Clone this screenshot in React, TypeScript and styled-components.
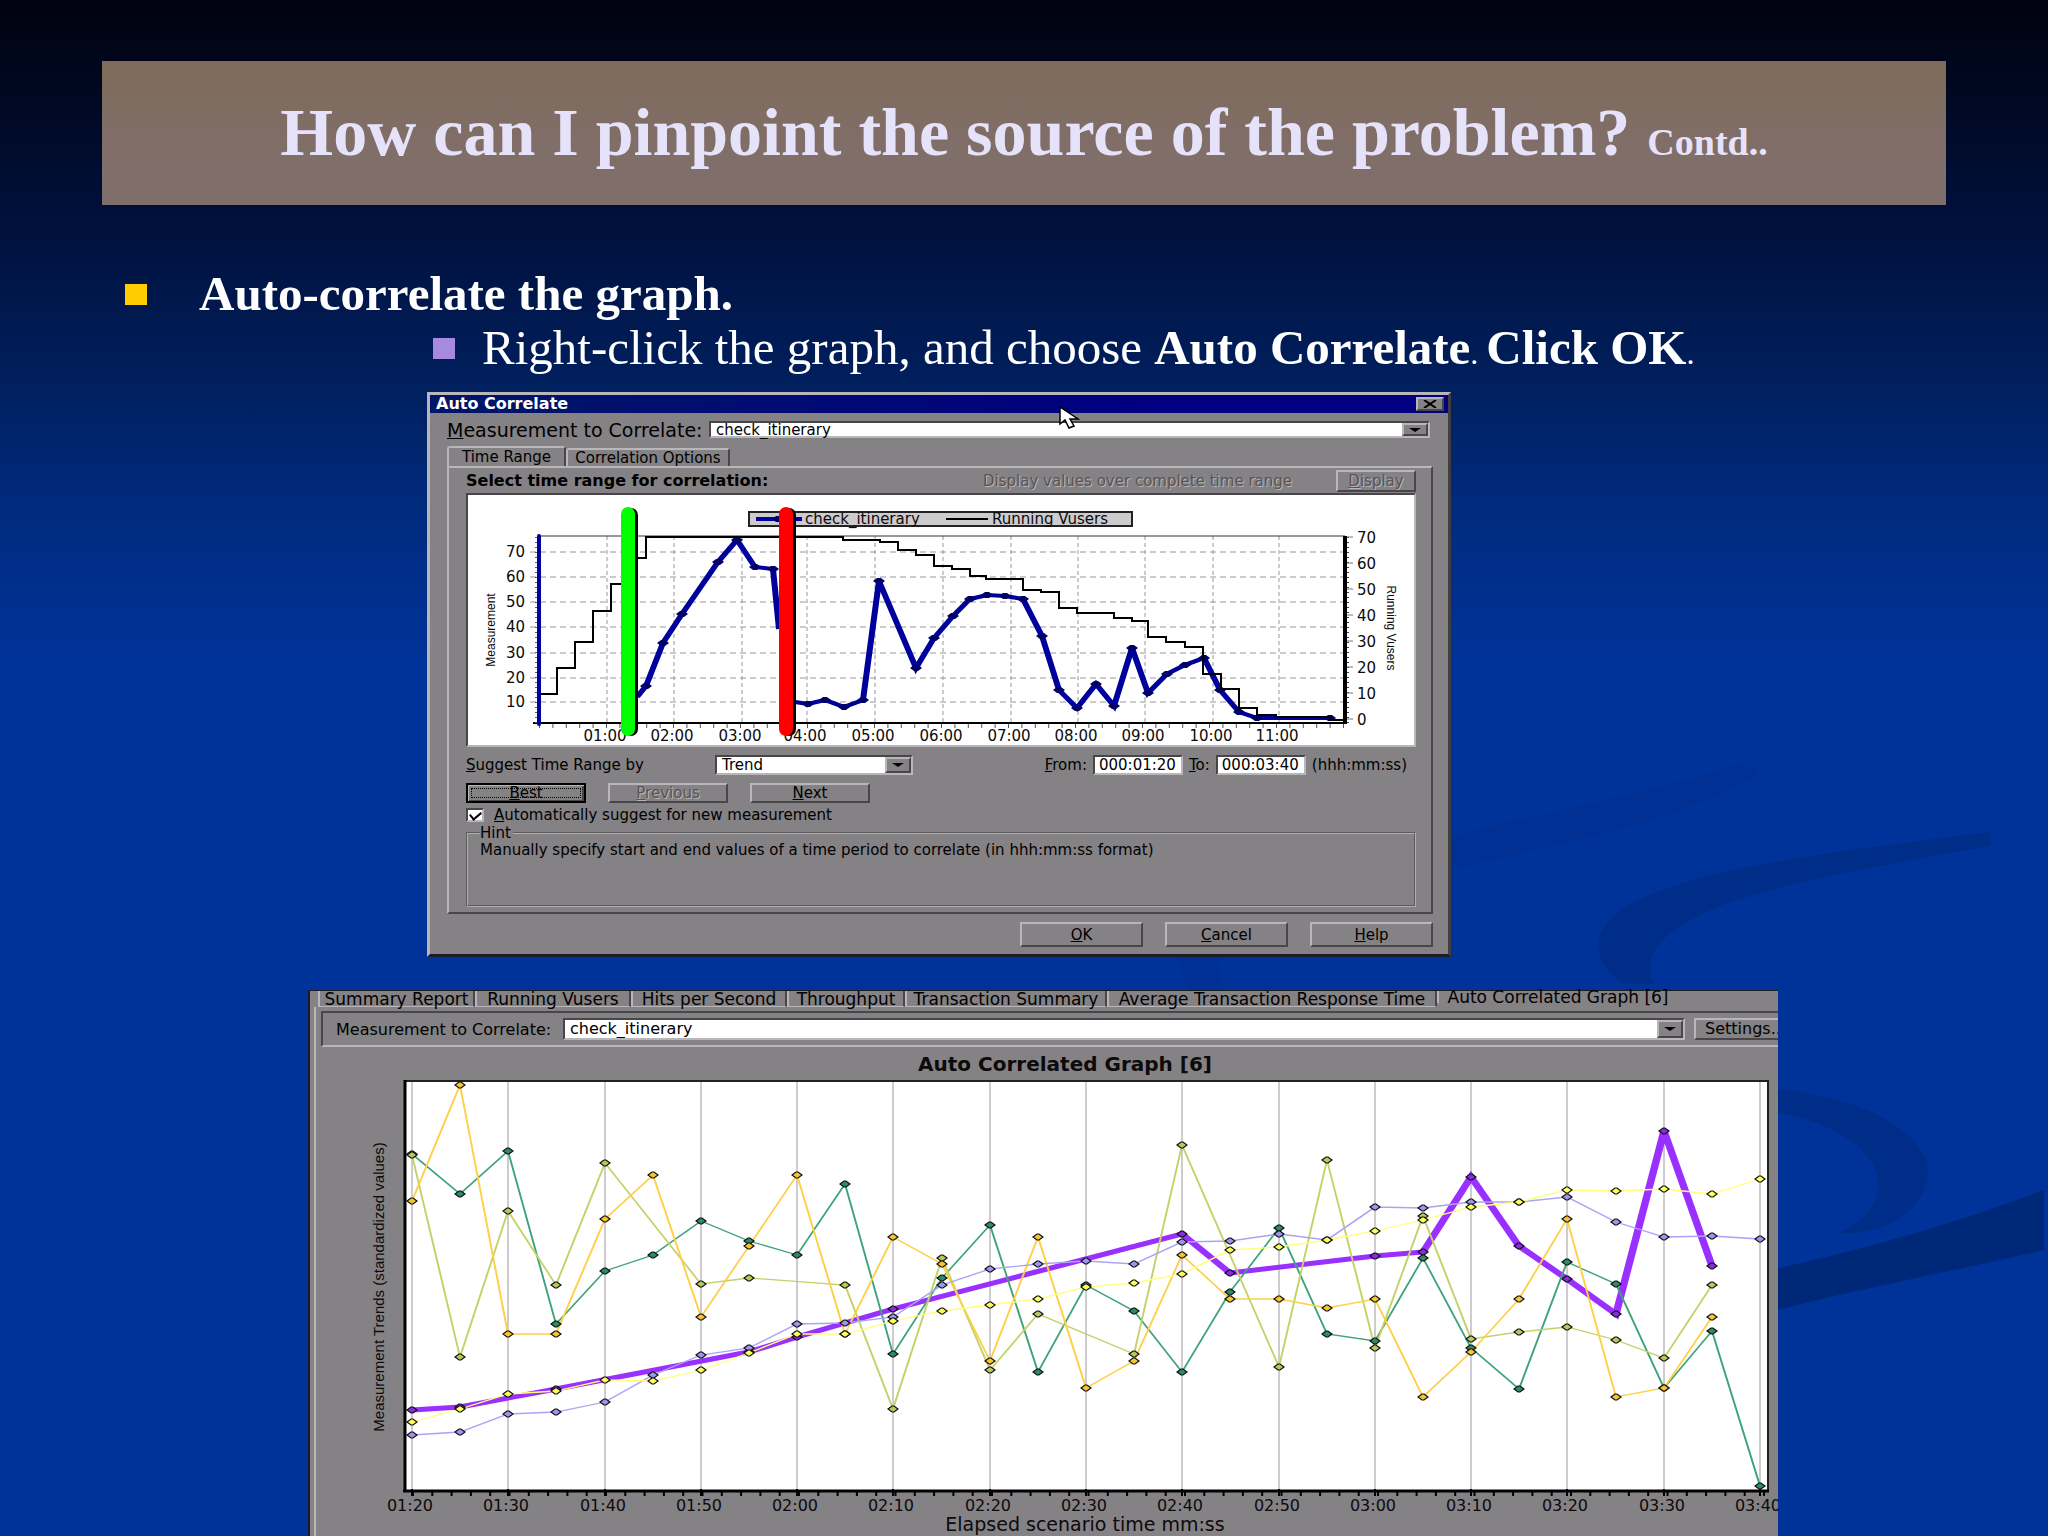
import React from "react";
import styled, { createGlobalStyle, css } from "styled-components";

const face = "#848284";
const light = "#b8b6b8";
const dark = "#484648";
const sans = '"DejaVu Sans", Verdana, sans-serif';
const narrow = '"Liberation Sans Narrow", "Arial Narrow", "Liberation Sans", sans-serif';

const raised = css`
  border: 2px solid;
  border-color: ${light} ${dark} ${dark} ${light};
`;
const sunken = css`
  border: 2px solid;
  border-color: ${dark} ${light} ${light} ${dark};
`;

const GlobalStyle = createGlobalStyle`
  * { box-sizing: border-box; }
  body { margin: 0; background: #003399; }
`;

const Slide = styled.main`
  position: relative;
  display: flex;
  flex-direction: column;
  min-height: 100vh;
  overflow: hidden;
  background: linear-gradient(#00020f 0, #00113d 230px, #00205f 390px, #002a7c 500px, #003399 660px);
  font-family: "Liberation Serif", "Times New Roman", serif;
`;

const Swirls = styled.svg`
  position: absolute;
  inset: 0;
  width: 100%;
  height: 100%;
`;

const Header = styled.header`
  position: relative;
  display: flex;
  justify-content: center;
  align-items: center;
  min-height: 144px;
  margin: 61px 102px 62px;
  padding-top: 8px;
  background: linear-gradient(#7f6b59, #806e69 60%, #806e6c);
`;

const Title = styled.h1`
  margin: 0;
  font-size: 68px;
  line-height: 80px;
  color: #e6e2fa;
`;

const TitleNote = styled.span`
  font-size: 38px;
`;

const Bullets = styled.ul`
  position: relative;
  margin: 0 0 17px;
  padding: 0;
  list-style: none;
  font-size: 49px;
  line-height: 54px;
  color: #fff;
`;

const Bullet = styled.li<{ $indent: number; $gap: number; $color: string }>`
  display: flex;
  align-items: center;
  gap: ${(p) => p.$gap}px;
  padding-left: ${(p) => p.$indent}px;

  &::before {
    content: "";
    width: 22px;
    height: 21px;
    background: ${(p) => p.$color};
  }
`;

const SmallDot = styled.span`
  font-size: 32px;
  line-height: 1;
`;

const Dialog = styled.section`
  position: relative;
  width: 50%;
  min-width: 1024px;
  margin: 0 0 33px 427px;
  border: 3px solid;
  border-color: ${light} #403e40 #1c1c24 ${light};
  background: ${face};
  font-family: ${sans};
  font-size: 15px;
  line-height: 16px;
  color: #000;
`;

const TitleBar = styled.div`
  display: flex;
  justify-content: space-between;
  align-items: center;
  height: 18px;
  padding: 0 4px 0 6px;
  background: linear-gradient(90deg, #001666, #000080 70%);
`;

const DialogTitle = styled.h2`
  margin: 0;
  font-size: 16px;
  line-height: 18px;
  color: #fff;
`;

const CloseButton = styled.button`
  ${raised}
  display: flex;
  justify-content: center;
  align-items: center;
  width: 28px;
  height: 14px;
  padding: 0;
  background: ${face};
`;

const DialogBody = styled.div`
  padding: 8px 15px 7px 17px;
`;

const CorrelateRow = styled.div`
  display: flex;
  align-items: center;
  gap: 4px;
  height: 17px;
  margin-bottom: 8px;
  padding-right: 3px;
`;

const BigLabel = styled.label`
  width: 258px;
  font-size: 19px;
  white-space: nowrap;
`;

const Combo = styled.span<{ $width?: number }>`
  ${sunken}
  display: flex;
  align-self: stretch;
  flex: ${(p) => (p.$width ? `0 0 ${p.$width}px` : "1")};
  background: #fff;
`;

const Select = styled.select`
  flex: 1;
  min-width: 0;
  margin: -3px 0;
  padding: 0 5px;
  border: 0;
  appearance: none;
  background: transparent;
  font: inherit;
  line-height: 18px;
  color: #000;
`;

const ComboArrow = styled.span`
  ${raised}
  display: flex;
  justify-content: center;
  align-items: center;
  width: 26px;
  background: ${face};

  &::after {
    content: "";
    border: 6px solid transparent;
    border-top: 4px solid #000;
    border-bottom: 0;
  }
`;

const Tabs = styled.div`
  display: flex;
  align-items: flex-end;
  height: 20px;
`;

const Tab = styled.button<{ $active?: boolean }>`
  height: ${(p) => (p.$active ? 20 : 18)}px;
  width: ${(p) => (p.$active ? 119 : 164)}px;
  padding: 0;
  border: 2px solid;
  border-color: ${light} ${dark} transparent ${light};
  border-bottom: 0;
  border-radius: 3px 3px 0 0;
  background: ${face};
  font: inherit;
  white-space: nowrap;
`;

const TabPanel = styled.div`
  ${raised}
  display: flex;
  flex-direction: column;
  padding: 2px 15px 5px 17px;
`;

const RangeHead = styled.div`
  display: flex;
  align-items: center;
  height: 22px;
  margin-bottom: 1px;
`;

const RangeTitle = styled.strong`
  font-size: 16px;
  white-space: nowrap;
`;

const embossed = css`
  color: #565456;
  text-shadow: 1px 1px ${light};
`;

const DisabledText = styled.span`
  ${embossed}
  margin: 0 44px 0 auto;
  white-space: nowrap;
`;

const Button = styled.button<{ $width: number; $height: number; $focus?: boolean }>`
  ${raised}
  width: ${(p) => p.$width}px;
  height: ${(p) => p.$height}px;
  padding: 0;
  background: ${face};
  font: inherit;
  line-height: 14px;
  color: #000;

  ${(p) =>
    p.$focus &&
    css`
      outline: 1px dotted #000;
      outline-offset: -6px;
      border-color: #000;
      box-shadow: inset 1px 1px ${light}, inset -2px -1px ${dark};
    `}

  &:disabled {
    ${embossed}
  }
`;

const ChartBox = styled.div`
  ${sunken}
  background: #fff;
`;

const Chart = styled.svg`
  display: block;
  width: 100%;
  height: auto;
`;

const ChartText = styled.text<{ $size?: number; $bold?: boolean }>`
  font-family: ${sans};
  font-size: ${(p) => p.$size ?? 15}px;
  font-weight: ${(p) => (p.$bold ? 700 : 400)};
  fill: #0c0a0c;
`;

const SideText = styled.text<{ $size: number }>`
  font-family: ${narrow};
  font-size: ${(p) => p.$size}px;
  text-anchor: middle;
  fill: #0c0a0c;
`;

const SuggestRow = styled.div`
  display: flex;
  align-items: center;
  height: 20px;
  margin: 8px 0;
  padding-right: 9px;
`;

const SuggestLabel = styled.label`
  width: 249px;
`;

const TimeFields = styled.div`
  display: flex;
  align-items: center;
  gap: 6px;
  margin-left: auto;
`;

const TimeInput = styled.input`
  ${sunken}
  width: 90px;
  height: 20px;
  padding: 0 0 0 4px;
  background: #fff;
  font: inherit;
  color: #000;
`;

const ButtonRow = styled.div<{ $end?: boolean; $top?: number }>`
  display: flex;
  gap: 22px;
  justify-content: ${(p) => (p.$end ? "flex-end" : "flex-start")};
  margin-top: ${(p) => p.$top ?? 0}px;
`;

const CheckRow = styled.label`
  display: flex;
  align-items: center;
  gap: 10px;
  height: 16px;
  margin: 4px 0 2px;
`;

const CheckBox = styled.input`
  ${sunken}
  display: flex;
  justify-content: center;
  width: 18px;
  height: 14px;
  margin: 0;
  appearance: none;
  background: #fff;

  &:checked::after {
    content: "";
    width: 5px;
    height: 9px;
    border: solid #000;
    border-width: 0 2px 2px 0;
    transform: translateY(-1px) rotate(50deg);
  }
`;

const HintBox = styled.fieldset`
  min-width: 0;
  height: 82px;
  margin: 0;
  padding: 0 12px;
  border: 2px groove #b0aeb0;
`;

const Legend = styled.legend`
  padding: 0 2px 0 0;
`;

const HintText = styled.p`
  margin: 0;
  line-height: 18px;
`;

const Pointer = styled.svg`
  position: absolute;
  left: 629px;
  top: 11px;
  width: 22px;
  height: 24px;
`;

const GraphWindow = styled.section`
  position: relative;
  flex: 1;
  display: flex;
  flex-direction: column;
  margin: 0 270px 0 308px;
  border-top: 1px solid #1c1c24;
  border-left: 2px solid #1c1c24;
  background: ${face};
  font-family: ${sans};
  font-size: 16px;
  color: #000;
`;

const GraphTabs = styled.div`
  display: grid;
  grid-template-columns: 157px 156px 156px 118px 202px 330px 240px;
  height: 16px;
  padding-left: 8px;
`;

const GraphTab = styled.button<{ $active?: boolean }>`
  display: flex;
  justify-content: center;
  align-items: center;
  height: ${(p) => (p.$active ? 12 : 16)}px;
  padding: 0;
  border: 0;
  border-right: ${(p) => (p.$active ? 0 : 2)}px solid ${dark};
  border-left: 2px solid ${light};
  border-bottom: ${(p) => (p.$active ? 0 : 1)}px solid ${light};
  background: transparent;
  font: inherit;
  font-size: 17px;
  line-height: 16px;
  white-space: nowrap;
`;

const GraphBody = styled.div`
  margin-left: 4px;
  border-left: 2px solid ${light};
  flex: 1;
`;

const Toolbar = styled.div`
  display: flex;
  align-items: center;
  gap: 9px;
  height: 36px;
  margin: 4px 0 0 5px;
  padding: 5px 0 5px 13px;
  border: 2px solid;
  border-color: ${dark} transparent ${light} ${dark};
  border-right: 0;
`;

const ToolLabel = styled.label`
  width: 218px;
  white-space: nowrap;
`;

const SettingsButton = styled.button`
  ${raised}
  flex: 0 0 84px;
  align-self: stretch;
  padding: 0 0 0 9px;
  border-right: 0;
  overflow: hidden;
  background: ${face};
  font: inherit;
  text-align: left;
  line-height: 16px;
  white-space: nowrap;
`;

/* Time-range chart */

const minuteLines = [139, 206, 274, 339, 407, 475, 543, 610, 677, 745, 811];
const valueLines = [57, 82, 107, 132, 158, 183, 207];

const firstRun: number[][] = [
  [169, 202], [178, 191], [195, 148], [214, 119], [250, 67], [269, 45], [287, 72], [305, 74], [311, 134],
];
const secondRun: number[][] = [
  [327, 207], [340, 209], [357, 205], [376, 212], [395, 205], [411, 86], [448, 173], [466, 143], [485, 121],
  [502, 104], [519, 100], [537, 101], [555, 104], [574, 141], [591, 195], [609, 213], [628, 189], [646, 211],
  [664, 153], [680, 198], [699, 179], [717, 170], [736, 163], [752, 195], [771, 217], [789, 223], [862, 223],
];

const stretch = 1.5;
const line = (pts: number[][]) => pts.map(([x, y]) => `${x / stretch},${y}`).join(" ");

const pad = (n: number) => String(n).padStart(2, "0");

function RangeChart() {
  return (
    <Chart viewBox="0 0 946 250" role="img" aria-label="Time range chart">
      <g stroke="#9a989a" strokeDasharray="6 4">
        {valueLines.map((y) => <line key={y} x1="62" x2="877" y1={y} y2={y} />)}
        {minuteLines.map((x) => <line key={x} x1={x} x2={x} y1="41" y2="228" strokeDasharray="4 3" />)}
      </g>
      <path d="M71 41H877" stroke="#333" strokeWidth="1" />
      <path d="M65 228H877" stroke="#000" strokeWidth="2" />
      <path d="M71 231H877" stroke="#555" strokeWidth="4" strokeDasharray="1 12.4" />
      <path d="M71 41V229" stroke="#00009c" strokeWidth="4" strokeLinecap="round" />
      <path d="M68 42V229" stroke="#5555b8" strokeWidth="2" strokeDasharray="1 4" />
      <path d="M877 41V229" stroke="#000" strokeWidth="4" />
      <path d="M880 42V229" stroke="#444" strokeWidth="2" strokeDasharray="1 4" />
      {[0, 1, 2, 3, 4, 5, 6, 7].map((n) => (
        <g key={n}>
          <path d={`M879 ${224 - n * 26}h6`} stroke="#777" />
          <ChartText x="889" y={230 - n * 26}>{n * 10}</ChartText>
        </g>
      ))}
      {valueLines.map((y, i) => <ChartText key={y} x="57" y={y + 5} textAnchor="end">{70 - i * 10}</ChartText>)}
      {minuteLines.map((x, i) => <ChartText key={x} x={x - 2} y="246" textAnchor="middle">{`${pad(i + 1)}:00`}</ChartText>)}
      <g transform={`scale(${stretch} 1)`} fill="none" stroke="#00009c" strokeWidth="4">
        <polyline points={line(firstRun)} />
        <polyline points={line(secondRun)} />
      </g>
      {[...firstRun.slice(1, -1), ...secondRun.slice(1)].map(([x, y]) => (
        <path key={x} d={`M${x - 6} ${y}L${x - 2} ${y - 3}H${x + 2}L${x + 6} ${y}L${x + 2} ${y + 3}H${x - 2}Z`} fill="#000066" />
      ))}
      <path
        d="M73 199H89V173H107V147H125V116H143V89H161V63H178V42H375V45H412V47H430V55H448V60H466V71H484V74H502V81H518V84H555V95H573V97H591V113H609V118H646V123H664V126H680V142H698V147H717V152H735V179H753V194H771V213H789V220H808V222H862V225H877"
        fill="none"
        stroke="#000"
        strokeWidth="2"
      />
      <rect x="281" y="17" width="383" height="14" fill="#cecbce" stroke="#222" strokeWidth="2" />
      <path d="M288 24H334" stroke="#00009c" strokeWidth="4" />
      <path d="M304 24l4-3h6l4 3l-4 3h-6z" fill="#000066" />
      <path d="M478 24H520" stroke="#000" strokeWidth="2" />
      <ChartText x="337" y="29">check_itinerary</ChartText>
      <ChartText x="524" y="29">Running Vusers</ChartText>
      <g strokeWidth="14" strokeLinecap="round">
        <path d="M163 20V234" stroke="#000" />
        <path d="M160 19V234" stroke="#00ff00" />
        <path d="M321 20V234" stroke="#000" />
        <path d="M318 19V234" stroke="#ff0000" />
      </g>
      <SideText $size={12} transform="translate(27 135) rotate(-90)">Measurement</SideText>
      <SideText $size={12} transform="translate(919 133) rotate(90)">Running Vusers</SideText>
    </Chart>
  );
}

/* Correlated graph: one sample every five seconds, null where a series has no sample */

type Series = { color: string; fill: string; width: number; values: (number | null)[] };

const series: Series[] = [
  {
    color: "#9a30ff", fill: "#8a2be2", width: 5,
    values: [363, 360, null, 342, null, null, null, 305, 290, null, 262, null, null, null, null, null, 187, 226, null, null, 209, 205, 130, 199, 232, 267, 84, 219],
  },
  {
    color: "#3fa37a", fill: "#2e8b67", width: 1.3,
    values: [107, 147, 104, 277, 224, 208, 174, 194, 208, 137, 307, 231, 178, 325, 238, 264, 325, 245, 181, 287, 294, 211, 301, 342, 215, 237, 341, 284, 439],
  },
  {
    color: "#c3d268", fill: "#b9c85a", width: 1.3,
    values: [108, 310, 164, 238, 116, null, 237, 231, null, 238, 362, 211, 323, 267, null, 307, 98, null, 320, 113, 301, 169, 292, 285, 280, 293, 311, 238],
  },
  {
    color: "#ffcf45", fill: "#f7c52e", width: 1.3,
    values: [154, 38, 287, 287, 172, 128, 270, 199, 128, 287, 190, 217, 314, 190, 341, 314, 208, 252, 252, 261, 252, 350, 305, 252, 172, 350, 341, 270],
  },
  {
    color: "#a9a4f5", fill: "#9c96f0", width: 1.3,
    values: [388, 385, 367, 365, 355, 328, 308, 301, 277, 276, 270, 238, 222, 217, 214, 217, 195, 194, 187, 193, 160, 161, 155, 155, 150, 175, 190, 189, 192],
  },
  {
    color: "#ffff7a", fill: "#ffff5a", width: 1.3,
    values: [375, 362, 347, 344, 333, 334, 323, 306, 287, 287, 274, 264, 258, 252, 240, 236, 227, 203, 200, 193, 184, 173, 160, 155, 143, 144, 142, 147, 132],
  },
];

const sampleX = (i: number) => Math.round(94 + (i * 1348) / 28);
const toPoints = (values: (number | null)[]) =>
  values.map((y, i) => [sampleX(i), y]).filter((p): p is number[] => p[1] !== null);

const clock = (i: number) => {
  const s = 80 + i * 10;
  return `${pad(Math.floor(s / 60))}:${pad(s % 60)}`;
};

function CorrelatedGraph() {
  const ticks = Array.from({ length: 15 }, (_, i) => i);
  return (
    <Chart viewBox="-2 0 1462 489" role="img" aria-label="Auto Correlated Graph">
      <ChartText $size={20} $bold x="747" y="24" textAnchor="middle">Auto Correlated Graph [6]</ChartText>
      <rect x="87" y="34" width="1363" height="410" fill="#fff" stroke="#222" strokeWidth="2" />
      <path d="M87 33V444M85 444H1451" stroke="#000" strokeWidth="3" />
      <path d="M94 447H1449" stroke="#000" strokeWidth="4" strokeDasharray="2 17.3" />
      {ticks.map((i) => (
        <g key={i}>
          <path d={`M${sampleX(i * 2)} 35V442`} stroke="#cfcbcf" strokeWidth="2" />
          <path d={`M${sampleX(i * 2)} 442V449`} stroke="#000" strokeWidth="2" />
          <ChartText $size={16} x={sampleX(i * 2) - 2} y="464" textAnchor="middle">{clock(i)}</ChartText>
        </g>
      ))}
      <g transform={`scale(${stretch} 1)`} fill="none">
        {series.map((s) => <polyline key={s.color} points={line(toPoints(s.values))} stroke={s.color} strokeWidth={s.width} />)}
      </g>
      {series.map((s) => (
        <g key={s.color} fill={s.fill} stroke="#111" strokeWidth="1.2">
          {toPoints(s.values).map(([x, y]) => <path key={x} d={`M${x - 5} ${y}L${x - 1} ${y - 3}H${x + 1}L${x + 5} ${y}L${x + 1} ${y + 3}H${x - 1}Z`} />)}
        </g>
      ))}
      <ChartText $size={19} x="767" y="484" textAnchor="middle">Elapsed scenario time mm:ss</ChartText>
      <SideText $size={15} transform="translate(66 240) rotate(-90)">Measurement Trends (standardized values)</SideText>
    </Chart>
  );
}

export default function App() {
  return (
    <Slide>
      <GlobalStyle />
      <Swirls viewBox="0 0 2048 1536" preserveAspectRatio="xMaxYMax slice" aria-hidden="true">
        <path d="M1440 840C1520 816 1640 796 1740 764L1760 772C1690 820 1560 844 1440 872Z" fill="#003093" />
        <path d="M1623 984C1590 962 1590 930 1623 908C1690 868 1830 852 1990 832V846C1880 866 1780 882 1716 908C1660 932 1640 956 1654 984Z" fill="#002d88" />
        <path d="M1170 940H1214L1224 990H1188Z" fill="#003094" />
        <path d="M1770 1088C1860 1096 1926 1130 1928 1172C1926 1210 1886 1236 1838 1233C1864 1222 1882 1200 1878 1178C1870 1142 1820 1118 1770 1112Z" fill="#002d88" />
        <path d="M1770 1270C1870 1248 1960 1222 2044 1190V1250C1950 1272 1870 1286 1770 1312Z" fill="#002878" />
      </Swirls>

      <Header>
        <Title>
          How can I pinpoint the source of the problem? <TitleNote>Contd..</TitleNote>
        </Title>
      </Header>

      <Bullets>
        <Bullet $indent={125} $gap={52} $color="#ffcc00"><strong>Auto-correlate the graph.</strong></Bullet>
        <Bullet $indent={433} $gap={27} $color="#a78ae0">
          <span>
            Right-click the graph, and choose <strong>Auto Correlate</strong>
            <SmallDot>. </SmallDot>
            <strong>Click OK</strong>
            <SmallDot>.</SmallDot>
          </span>
        </Bullet>
      </Bullets>

      <Dialog aria-label="Auto Correlate">
        <TitleBar>
          <DialogTitle>Auto Correlate</DialogTitle>
          <CloseButton aria-label="Close">
            <svg width="14" height="8" viewBox="0 0 14 8"><path d="M1 0L13 8M13 0L1 8" stroke="#000" strokeWidth="2" /></svg>
          </CloseButton>
        </TitleBar>
        <DialogBody>
          <CorrelateRow>
            <BigLabel htmlFor="measurement"><u>M</u>easurement to Correlate:</BigLabel>
            <Combo>
              <Select id="measurement"><option>check_itinerary</option></Select>
              <ComboArrow />
            </Combo>
          </CorrelateRow>
          <Tabs role="tablist">
            <Tab role="tab" $active>Time Range</Tab>
            <Tab role="tab">Correlation Options</Tab>
          </Tabs>
          <TabPanel role="tabpanel">
            <RangeHead>
              <RangeTitle>Select time range for correlation:</RangeTitle>
              <DisabledText>Display values over complete time range</DisabledText>
              <Button $width={80} $height={22} disabled><u>D</u>isplay</Button>
            </RangeHead>
            <ChartBox><RangeChart /></ChartBox>
            <SuggestRow>
              <SuggestLabel htmlFor="suggest"><u>S</u>uggest Time Range by</SuggestLabel>
              <Combo $width={198}>
                <Select id="suggest"><option>Trend</option></Select>
                <ComboArrow />
              </Combo>
              <TimeFields>
                <label htmlFor="from"><u>F</u>rom:</label>
                <TimeInput id="from" defaultValue="000:01:20" />
                <label htmlFor="to"><u>T</u>o:</label>
                <TimeInput id="to" defaultValue="000:03:40" />
                <span>(hhh:mm:ss)</span>
              </TimeFields>
            </SuggestRow>
            <ButtonRow>
              <Button $width={120} $height={20} $focus><u>B</u>est</Button>
              <Button $width={120} $height={20} disabled><u>P</u>revious</Button>
              <Button $width={120} $height={20}><u>N</u>ext</Button>
            </ButtonRow>
            <CheckRow>
              <CheckBox type="checkbox" defaultChecked />
              <span><u>A</u>utomatically suggest for new measurement</span>
            </CheckRow>
            <HintBox>
              <Legend>Hint</Legend>
              <HintText>Manually specify start and end values of a time period to correlate (in hhh:mm:ss format)</HintText>
            </HintBox>
          </TabPanel>
          <ButtonRow $end $top={8}>
            <Button $width={123} $height={25}><u>O</u>K</Button>
            <Button $width={123} $height={25}><u>C</u>ancel</Button>
            <Button $width={123} $height={25}><u>H</u>elp</Button>
          </ButtonRow>
        </DialogBody>
        <Pointer viewBox="0 0 22 24" aria-hidden="true">
          <path d="M1 1V18L6 14L10 22L15 20L11 13H19Z" fill="#fff" stroke="#000" strokeWidth="1.5" />
        </Pointer>
      </Dialog>

      <GraphWindow aria-label="Auto Correlated Graph">
        <GraphTabs role="tablist">
          <GraphTab role="tab">Summary Report</GraphTab>
          <GraphTab role="tab">Running Vusers</GraphTab>
          <GraphTab role="tab">Hits per Second</GraphTab>
          <GraphTab role="tab">Throughput</GraphTab>
          <GraphTab role="tab">Transaction Summary</GraphTab>
          <GraphTab role="tab">Average Transaction Response Time</GraphTab>
          <GraphTab role="tab" $active>Auto Correlated Graph [6]</GraphTab>
        </GraphTabs>
        <GraphBody>
          <Toolbar>
            <ToolLabel htmlFor="graph-measurement">Measurement to Correlate:</ToolLabel>
            <Combo>
              <Select id="graph-measurement"><option>check_itinerary</option></Select>
              <ComboArrow />
            </Combo>
            <SettingsButton>Settings...</SettingsButton>
          </Toolbar>
          <CorrelatedGraph />
        </GraphBody>
      </GraphWindow>
    </Slide>
  );
}
